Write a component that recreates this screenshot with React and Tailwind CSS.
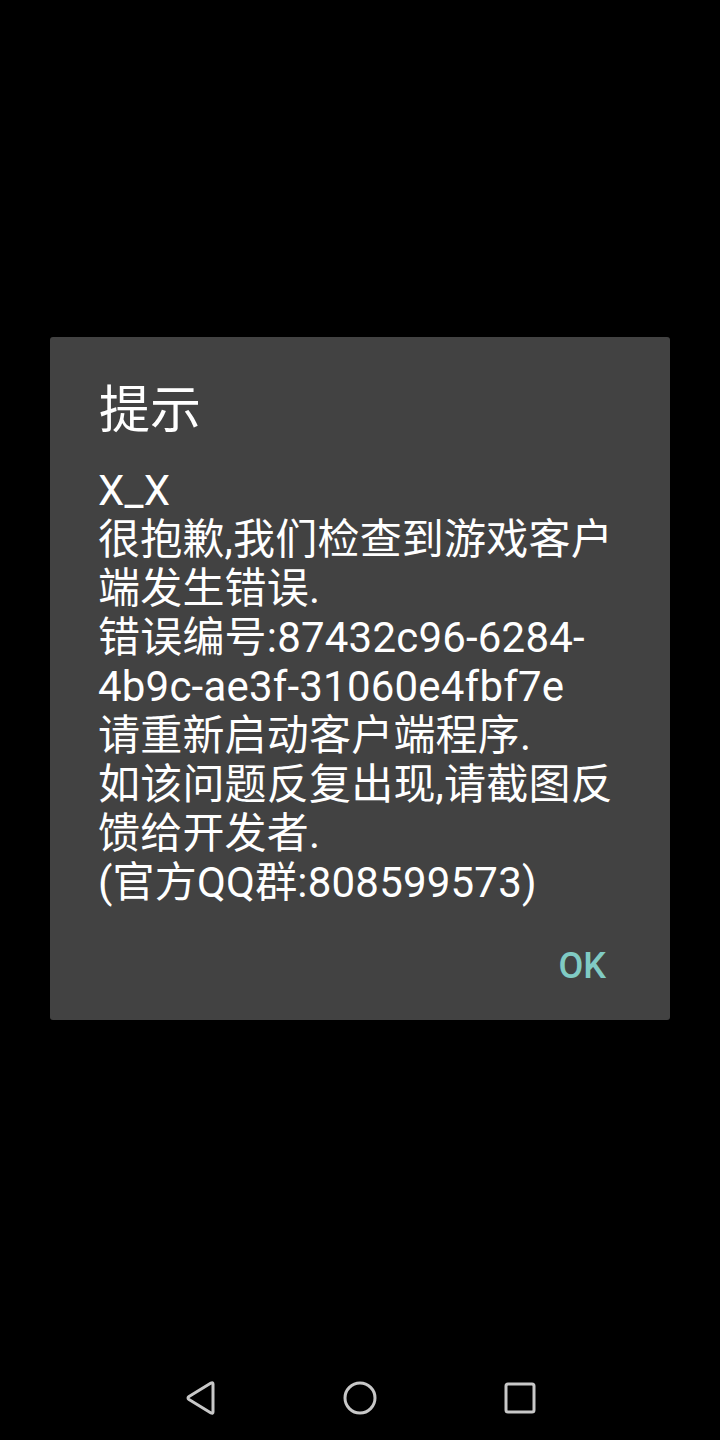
export default function App() {
  const lines = [
    'X_X',
    '很抱歉,我们检查到游戏客户',
    '端发生错误.',
    '错误编号:87432c96-6284-',
    '4b9c-ae3f-31060e4fbf7e',
    '请重新启动客户端程序.',
    '如该问题反复出现,请截图反',
    '馈给开发者.',
    '(官方QQ群:808599573)',
  ];

  return (
    <div
      className="w-[720px] h-[1440px] bg-black flex flex-col"
      style={{ fontFamily: 'Roboto, "Noto Sans CJK SC", sans-serif' }}
    >
      <div className="flex-1 flex items-start justify-center pt-[337px]">
        {/* dialog */}
        <div className="w-[620px] h-[683px] bg-[#424242] rounded-[3px] flex flex-col">
          <div className="pt-[44px] pl-[49px] text-[51px] leading-[60px] text-white">提示</div>
          <div className="mt-[25px] pl-[48px] text-[42px] leading-[49px] text-white whitespace-nowrap tracking-[0.2px]">
            {lines.map((l, i) => (
              <div key={i}>{l}</div>
            ))}
          </div>
          <div className="mt-[35px] flex justify-end pr-[64px]">
            <span className="text-[36px] leading-[48px] font-medium text-[#80cbc4]">OK</span>
          </div>
        </div>
      </div>

      {/* navigation bar */}
      <div className="h-[84px] flex items-center justify-between px-[182px]">
        <svg width="36" height="36" viewBox="0 0 36 36" fill="none">
          <path d="M31 4 L31 32 Q31 34 29 33 L7 19.5 Q5 18 7 16.5 L29 3 Q31 2 31 4Z" stroke="#c8c8c8" strokeWidth="3" strokeLinejoin="round" />
        </svg>
        <svg width="36" height="36" viewBox="0 0 36 36" fill="none">
          <circle cx="18" cy="18" r="15" stroke="#c8c8c8" strokeWidth="3" />
        </svg>
        <svg width="36" height="36" viewBox="0 0 36 36" fill="none">
          <rect x="4" y="4" width="28" height="28" rx="2" stroke="#c8c8c8" strokeWidth="3" />
        </svg>
      </div>
    </div>
  );
}
